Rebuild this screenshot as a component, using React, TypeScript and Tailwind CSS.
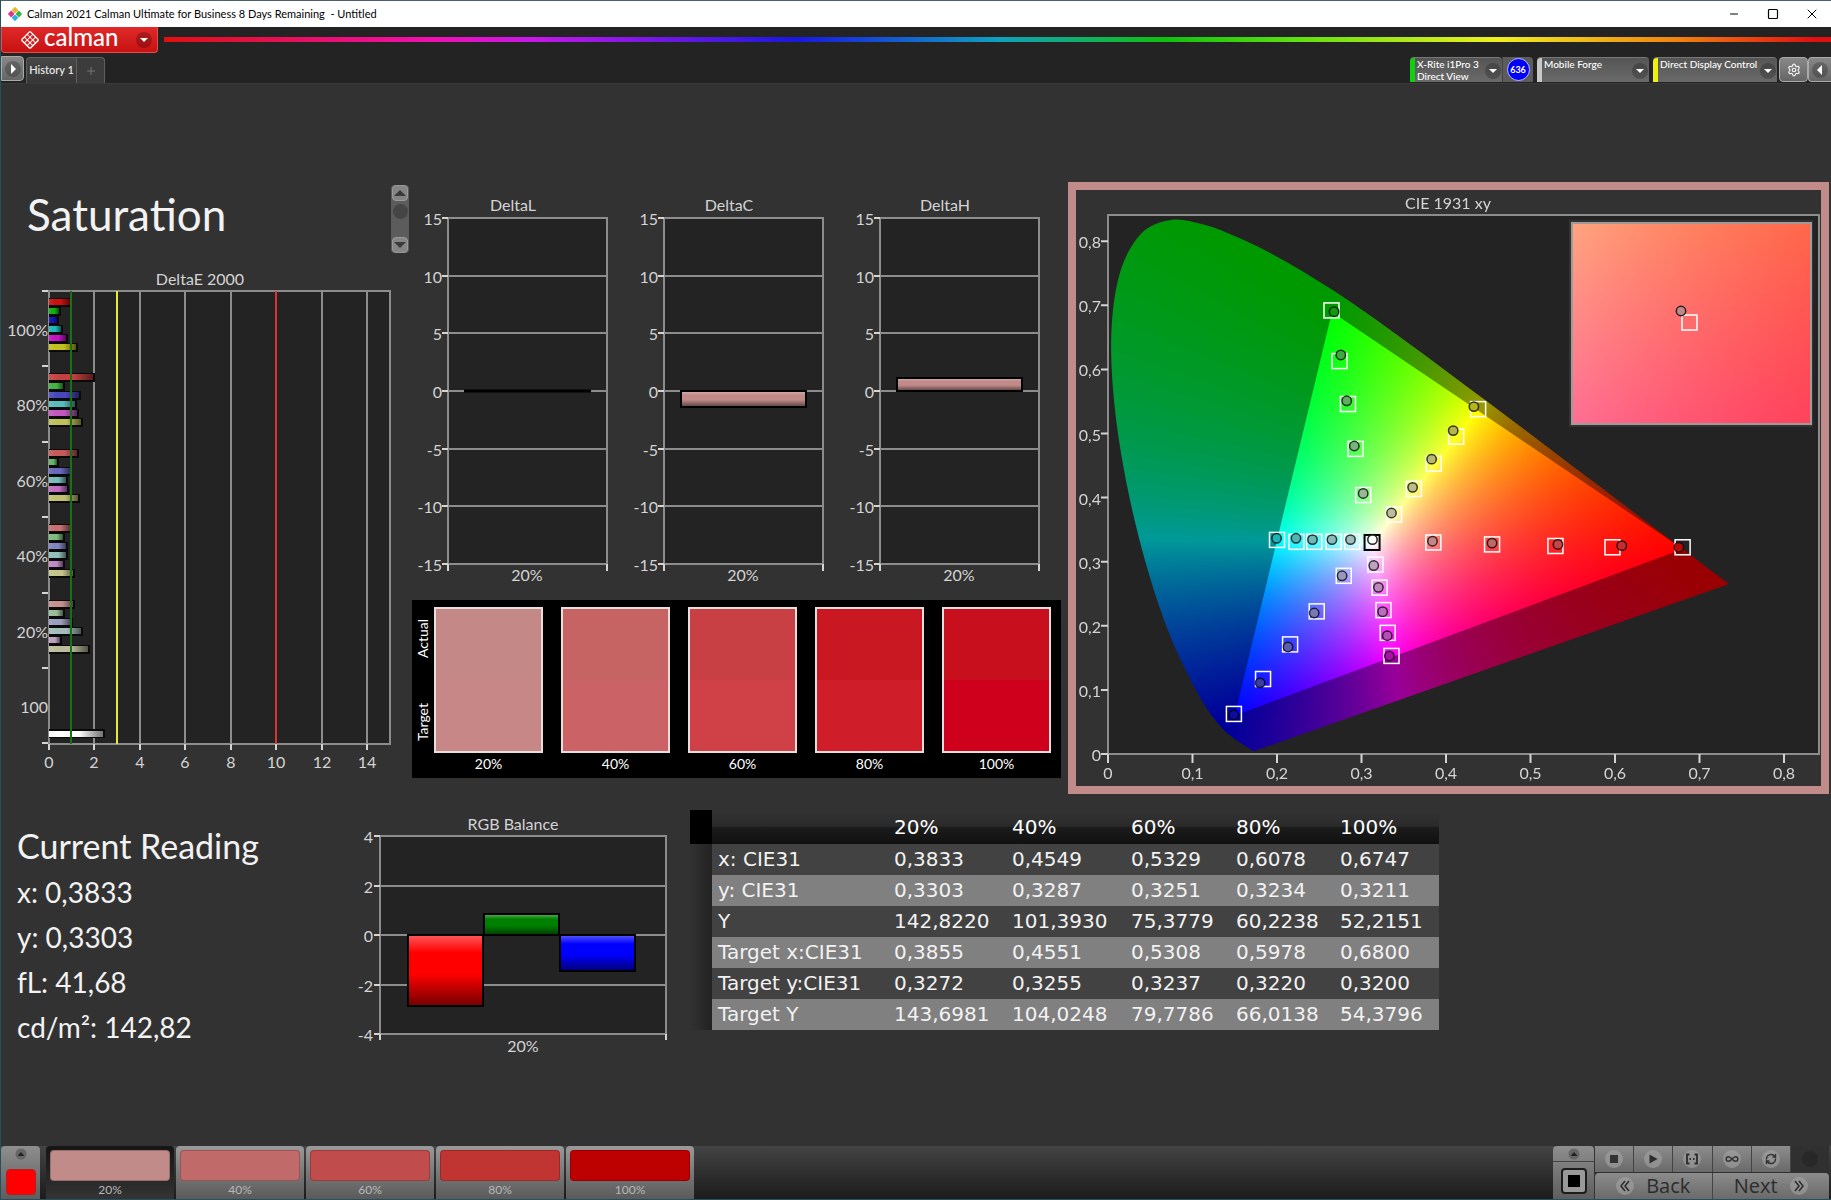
import { useEffect, useRef } from 'react';
import { clsx } from 'clsx';
import { Infinity as InfinityIcon, Minus, Plus, RefreshCw, Settings, Square, X } from 'lucide-react';

type Point = [number, number];

const SPECTRAL_LOCUS: Point[] = [
  [0.1741, 0.005], [0.1733, 0.0048], [0.1714, 0.0051], [0.1689, 0.0069], [0.1644, 0.0109],
  [0.1566, 0.0177], [0.151, 0.0227], [0.144, 0.0297], [0.1355, 0.0399], [0.1241, 0.0578],
  [0.1096, 0.0868], [0.0913, 0.1327], [0.0687, 0.2007], [0.0454, 0.295], [0.0235, 0.4127],
  [0.0082, 0.5384], [0.0039, 0.6548], [0.0139, 0.7502], [0.0389, 0.812], [0.0743, 0.8338],
  [0.1142, 0.8262], [0.1547, 0.8059], [0.1929, 0.7816], [0.2296, 0.7543], [0.2658, 0.7243],
  [0.3016, 0.6923], [0.3373, 0.6589], [0.3731, 0.6245], [0.4087, 0.5896], [0.4441, 0.5547],
  [0.4788, 0.5202], [0.5125, 0.4866], [0.5448, 0.4544], [0.5752, 0.4242], [0.6029, 0.3965],
  [0.627, 0.3725], [0.6658, 0.334], [0.6915, 0.3083], [0.719, 0.2809], [0.7347, 0.2653],
];

// DCI-P3 primaries
const GAMUT: Point[] = [[0.68, 0.32], [0.265, 0.69], [0.15, 0.06]];

interface Sample {
  target: Point;
  actual: Point;
  fill: string;
}

const samples: Sample[] = [
  { target: [0.2645, 0.692], actual: [0.2675, 0.69], fill: '#109a10' },
  { target: [0.274, 0.613], actual: [0.2755, 0.6225], fill: '#3fa83f' },
  { target: [0.284, 0.546], actual: [0.2825, 0.551], fill: '#5fae5f' },
  { target: [0.293, 0.476], actual: [0.2915, 0.4805], fill: '#7ab47a' },
  { target: [0.302, 0.404], actual: [0.302, 0.4065], fill: '#98b898' },
  { target: [0.438, 0.538], actual: [0.433, 0.542], fill: '#b4b41c' },
  { target: [0.412, 0.495], actual: [0.4085, 0.5045], fill: '#b4b450' },
  { target: [0.3855, 0.453], actual: [0.383, 0.46], fill: '#b8b870' },
  { target: [0.362, 0.4135], actual: [0.3605, 0.416], fill: '#bcbc88' },
  { target: [0.3385, 0.3735], actual: [0.3355, 0.376], fill: '#bcbca0' },
  { target: [0.2, 0.334], actual: [0.1995, 0.3365], fill: '#1cb4b4' },
  { target: [0.223, 0.331], actual: [0.2225, 0.3365], fill: '#50b4b4' },
  { target: [0.244, 0.331], actual: [0.242, 0.3345], fill: '#70b8b8' },
  { target: [0.267, 0.331], actual: [0.265, 0.3345], fill: '#88bcbc' },
  { target: [0.289, 0.331], actual: [0.287, 0.3345], fill: '#a0bcbc' },
  { target: [0.385, 0.33], actual: [0.384, 0.332], fill: '#c08888' },
  { target: [0.4545, 0.327], actual: [0.4545, 0.329], fill: '#c06868' },
  { target: [0.5295, 0.3245], actual: [0.5325, 0.327], fill: '#c04848' },
  { target: [0.597, 0.3225], actual: [0.608, 0.325], fill: '#c03030' },
  { target: [0.68, 0.3225], actual: [0.6755, 0.3225], fill: '#b80808' },
  { target: [0.3165, 0.2955], actual: [0.3145, 0.294], fill: '#bca4bc' },
  { target: [0.3215, 0.2595], actual: [0.32, 0.26], fill: '#bc88bc' },
  { target: [0.326, 0.2245], actual: [0.325, 0.222], fill: '#bc6cbc' },
  { target: [0.331, 0.189], actual: [0.3305, 0.1845], fill: '#b84cb8' },
  { target: [0.3355, 0.153], actual: [0.333, 0.153], fill: '#a810a8' },
  { target: [0.279, 0.278], actual: [0.277, 0.278], fill: '#9898bc' },
  { target: [0.247, 0.2225], actual: [0.244, 0.22], fill: '#7878b4' },
  { target: [0.2155, 0.171], actual: [0.213, 0.167], fill: '#5c5cb0' },
  { target: [0.1835, 0.117], actual: [0.18, 0.111], fill: '#3c3ca8' },
  { target: [0.149, 0.0625], actual: [0.149, 0.061], fill: '#0c0ca0' },
];

const swatches = [
  { label: '20%', actual: '#c48886', target: '#c88787', button: '#c08b88' },
  { label: '40%', actual: '#c66464', target: '#cb6366', button: '#c06a69' },
  { label: '60%', actual: '#c84043', target: '#cf4047', button: '#c04c4b' },
  { label: '80%', actual: '#c91822', target: '#cf1e29', button: '#c03432' },
  { label: '100%', actual: '#c80f1e', target: '#cf001b', button: '#bd0000' },
];

const deltaE = [
  { label: '100%', values: [0.95, 0.46, 0.36, 0.56, 0.76, 1.2], colors: ['#cc1111', '#12b012', '#1616b8', '#22b8b8', '#c413c4', '#c0c01c'] },
  { label: '80%', values: [1.97, 0.65, 1.35, 1.15, 1.24, 1.42], colors: ['#c44040', '#44b444', '#4848bc', '#58bcbc', '#c058c0', '#c0c058'] },
  { label: '60%', values: [1.24, 0.36, 0.95, 0.76, 0.83, 1.28], colors: ['#c45a5a', '#64b864', '#6868bc', '#78bcbc', '#c070c0', '#c0c070'] },
  { label: '40%', values: [0.95, 0.62, 0.76, 0.76, 0.64, 1.07], colors: ['#c87070', '#7cbc7c', '#8484c0', '#90c0bc', '#c088c4', '#c4c48a'] },
  { label: '20%', values: [1.07, 0.62, 0.97, 1.45, 0.5, 1.73], colors: ['#c49090', '#98bc98', '#9c9cc0', '#a4bcbc', '#bca0c0', '#bcbc9c'] },
];

const measurements: [string, string[]][] = [
  ['x: CIE31', ['0,3833', '0,4549', '0,5329', '0,6078', '0,6747']],
  ['y: CIE31', ['0,3303', '0,3287', '0,3251', '0,3234', '0,3211']],
  ['Y', ['142,8220', '101,3930', '75,3779', '60,2238', '52,2151']],
  ['Target x:CIE31', ['0,3855', '0,4551', '0,5308', '0,5978', '0,6800']],
  ['Target y:CIE31', ['0,3272', '0,3255', '0,3237', '0,3220', '0,3200']],
  ['Target Y', ['143,6981', '104,0248', '79,7786', '66,0138', '54,3796']],
];

const readings = ['x: 0,3833', 'y: 0,3303', 'fL: 41,68', 'cd/m²: 142,82'];

// xy -> P3 RGB, out of range channels clipped and the brightest scaled to full
function xyToRgb(x: number, y: number) {
  const yy = Math.max(y, 0.0001);
  const X = x / yy;
  const Z = (1 - x - yy) / yy;
  const r = Math.max(0, 2.4935 * X - 0.9314 - 0.4027 * Z);
  const g = Math.max(0, -0.8295 * X + 1.7627 + 0.0236 * Z);
  const b = Math.max(0, 0.0358 * X - 0.0762 + 0.9569 * Z);
  const max = Math.max(r, g, b);
  return [(r / max) * 255, (g / max) * 255, (b / max) * 255];
}

interface GamutFieldProps {
  left: number;
  top: number;
  width: number;
  height: number;
  xRange: Point;
  yRange: Point;
  locus?: boolean;
}

function GamutField({ left, top, width, height, xRange, yRange, locus }: GamutFieldProps) {
  const ref = useRef<HTMLCanvasElement>(null);

  useEffect(() => {
    const ctx = ref.current?.getContext('2d');
    if (!ctx) return;

    const image = ctx.createImageData(width, height);
    for (let j = 0; j < height; j++) {
      const y = yRange[1] - ((j + 0.5) / height) * (yRange[1] - yRange[0]);
      for (let i = 0; i < width; i++) {
        const x = xRange[0] + ((i + 0.5) / width) * (xRange[1] - xRange[0]);
        const [r, g, b] = xyToRgb(x, y);
        image.data.set([r, g, b, 255], (j * width + i) * 4);
      }
    }
    ctx.putImageData(image, 0, 0);
    if (!locus) return;

    const px = ([x, y]: Point): Point => [
      ((x - xRange[0]) / (xRange[1] - xRange[0])) * width,
      ((yRange[1] - y) / (yRange[1] - yRange[0])) * height,
    ];

    // Cut the field to the horseshoe
    const pts = SPECTRAL_LOCUS.map(px);
    ctx.globalCompositeOperation = 'destination-in';
    ctx.beginPath();
    ctx.moveTo(...pts[0]);
    for (let i = 0; i < pts.length - 1; i++) {
      const p0 = pts[Math.max(i - 1, 0)];
      const p1 = pts[i];
      const p2 = pts[i + 1];
      const p3 = pts[Math.min(i + 2, pts.length - 1)];
      ctx.bezierCurveTo(
        p1[0] + (p2[0] - p0[0]) / 6,
        p1[1] + (p2[1] - p0[1]) / 6,
        p2[0] - (p3[0] - p1[0]) / 6,
        p2[1] - (p3[1] - p1[1]) / 6,
        p2[0],
        p2[1]
      );
    }
    ctx.closePath();
    ctx.fill();

    // Dim everything outside the target gamut
    ctx.globalCompositeOperation = 'source-atop';
    ctx.fillStyle = 'rgba(0, 0, 0, 0.4)';
    ctx.beginPath();
    ctx.rect(0, 0, width, height);
    GAMUT.map(px).forEach((p, i) => (i ? ctx.lineTo(...p) : ctx.moveTo(...p)));
    ctx.closePath();
    ctx.fill('evenodd');
    ctx.globalCompositeOperation = 'source-over';
  }, [width, height, xRange, yRange, locus]);

  return (
    <foreignObject x={left} y={top} width={width} height={height}>
      <canvas ref={ref} width={width} height={height} className="block" />
    </foreignObject>
  );
}

const X_RANGE: Point = [0, 0.84];
const Y_RANGE: Point = [0, 0.84];
const ZOOM_X: Point = [0.374, 0.433];
const ZOOM_Y: Point = [0.3003, 0.3537];

function CieChart() {
  const cx = (x: number) => 32 + x * 845;
  const cy = (y: number) => 564 - y * 641;

  return (
    <svg viewBox="0 0 745 596" className="block w-full" role="img" aria-label="CIE 1931 xy">
      <rect x="32" y="25" width="711" height="539" fill="#232323" stroke="#8c8c8c" strokeWidth="2" />
      <GamutField left={32} top={26} width={710} height={538} xRange={X_RANGE} yRange={Y_RANGE} locus />
      <text x="372" y="19" textAnchor="middle" className="fill-[#d4d4d4] text-[16px]">CIE 1931 xy</text>
      {[0, 1, 2, 3, 4, 5, 6, 7, 8].map((n) => (
        <g key={n} className="fill-[#d4d4d4] text-[16px]">
          <path d={`M${cx(n / 10)} 564v9M32 ${cy(n / 10)}h-7`} stroke="#d4d4d4" strokeWidth="2" />
          <text x={cx(n / 10)} y="589" textAnchor="middle">{n ? `0,${n}` : '0'}</text>
          <text x="25" y={cy(n / 10) + 7} textAnchor="end">{n ? `0,${n}` : '0'}</text>
        </g>
      ))}
      {samples.map(({ target, actual, fill }) => (
        <g key={fill + target[0]}>
          <rect x={cx(target[0]) - 7.5} y={cy(target[1]) - 7.5} width="15" height="15" fill="none" stroke="#fff" strokeWidth="1.5" />
          <circle cx={cx(actual[0])} cy={cy(actual[1])} r="4.7" fill={fill} stroke="#000" strokeOpacity="0.75" strokeWidth="1.5" />
        </g>
      ))}
      <rect x={cx(0.3125) - 7.5} y={cy(0.33) - 7.5} width="15" height="15" fill="none" stroke="#000" strokeWidth="2" />
      <circle cx={cx(0.313)} cy={cy(0.3345)} r="4.7" fill="#fff" stroke="#222" strokeWidth="1.5" />

      <rect x="493" y="30" width="244" height="207" fill="#333" />
      <GamutField left={496} top={33} width={239} height={201} xRange={ZOOM_X} yRange={ZOOM_Y} />
      <rect x="496" y="33" width="239" height="201" fill="none" stroke="#a09a98" strokeWidth="2" />
      <rect x="606" y="125" width="15" height="15" fill="none" stroke="#fff" strokeWidth="1.5" />
      <circle cx="605" cy="121" r="4.7" fill="#c08888" stroke="#222" strokeWidth="1.5" />
    </svg>
  );
}

function GlossDefs({ id, horizontal }: { id: string; horizontal?: boolean }) {
  return (
    <defs>
      <linearGradient id={id} x2={horizontal ? 1 : 0} y2={horizontal ? 0 : 1}>
        <stop offset="0" stopColor="#fff" stopOpacity={horizontal ? 0.1 : 0.35} />
        <stop offset="0.25" stopColor="#fff" stopOpacity="0" />
        <stop offset="0.55" stopColor="#000" stopOpacity="0" />
        <stop offset="1" stopColor="#000" stopOpacity="0.55" />
      </linearGradient>
    </defs>
  );
}

function DeltaEChart() {
  const cx = (v: number) => Math.round(48.5 + v * 22.75);
  const pitch = 75.4;

  return (
    <svg viewBox="1 -6 404 513" className="block w-full" role="img" aria-label="DeltaE 2000">
      <GlossDefs id="gloss-e" horizontal />
      <text x="200" y="13" textAnchor="middle" className="fill-[#d4d4d4] text-[16px]">DeltaE 2000</text>
      <rect x="49" y="19" width="341" height="453" fill="#232323" stroke="#8c8c8c" strokeWidth="2" />
      {[0, 2, 4, 6, 8, 10, 12, 14].map((v) => (
        <g key={v}>
          {v > 0 && <path d={`M${cx(v)} 19v453`} stroke="#8c8c8c" strokeWidth="2" />}
          <path d={`M${cx(v)} 472v6`} stroke="#d4d4d4" strokeWidth="2" />
          <text x={cx(v)} y="496" textAnchor="middle" className="fill-[#d4d4d4] text-[16px]">{v}</text>
        </g>
      ))}
      {[0, 1, 2, 3, 4, 5, 6].map((n) => (
        <path key={n} d={`M42 ${Math.round(19 + n * pitch)}h6`} stroke="#d4d4d4" strokeWidth="2" />
      ))}
      {deltaE.map((group, n) => (
        <g key={group.label}>
          <text x="48" y={Math.round(64 + n * pitch)} textAnchor="end" className="fill-[#d4d4d4] text-[16px]">{group.label}</text>
          {group.values.map((v, i) => {
            const y = Math.round(26 + n * pitch + i * 9);
            return (
              <g key={i}>
                <rect x="49" y={y} width={cx(v) - 47} height="9" fill="#0a0a0a" />
                <rect x="49" y={y + 1} width={cx(v) - 49} height="6" fill={group.colors[i]} />
                <rect x="49" y={y + 1} width={cx(v) - 49} height="6" fill="url(#gloss-e)" />
              </g>
            );
          })}
        </g>
      ))}
      <text x="48" y="441" textAnchor="end" className="fill-[#d4d4d4] text-[16px]">100</text>
      <rect x="49" y="457" width="56" height="9" fill="#0a0a0a" />
      <rect x="49" y="459" width="54" height="6" fill="#fff" />
      <rect x="49" y="459" width="54" height="6" fill="url(#gloss-e)" />
      <path d={`M${cx(1)} 19v453`} stroke="#187018" strokeWidth="2" />
      <path d={`M${cx(3)} 19v453`} stroke="#e8e838" strokeWidth="2" />
      <path d={`M${cx(10)} 19v453`} stroke="#d83434" strokeWidth="2" />
    </svg>
  );
}

function DeltaChart({ title, value }: { title: string; value: number }) {
  const cy = (v: number) => Math.round(209 - v * 11.53);
  const top = Math.min(cy(0), cy(value));
  const height = Math.abs(cy(value) - cy(0));
  const id = `gloss-${title}`;

  return (
    <svg viewBox="0 0 216 410" className="block w-full min-w-0 flex-1" role="img" aria-label={title}>
      <GlossDefs id={id} />
      <text x="108" y="29" textAnchor="middle" className="fill-[#d4d4d4] text-[16px]">{title}</text>
      <rect x="43" y={cy(15)} width="159" height={cy(-15) - cy(15)} fill="#232323" stroke="#8c8c8c" strokeWidth="2" />
      {[15, 10, 5, 0, -5, -10, -15].map((v) => (
        <g key={v}>
          <path d={`M43 ${cy(v)}h159`} stroke="#8c8c8c" strokeWidth="2" />
          <path d={`M37 ${cy(v)}h6`} stroke="#d4d4d4" strokeWidth="2" />
          <text x="37" y={cy(v) + 7} textAnchor="end" className="fill-[#d4d4d4] text-[16px]">{v}</text>
        </g>
      ))}
      <path d={`M43 ${cy(-15)}v7M202 ${cy(-15)}v7`} stroke="#d4d4d4" strokeWidth="2" />
      <text x="122" y="399" textAnchor="middle" className="fill-[#d4d4d4] text-[16px]">20%</text>
      {height === 0 ? (
        <path d={`M59 ${cy(0)}h127`} stroke="#000" strokeWidth="3" />
      ) : (
        <>
          <rect x="60" y={top} width="125" height={height} fill="#c08b88" />
          <rect x="60" y={top} width="125" height={height} fill={`url(#${id})`} stroke="#000" strokeWidth="2" />
        </>
      )}
    </svg>
  );
}

function RgbBalance() {
  const cy = (v: number) => Math.round(125 - v * 24.75);
  const bars = [
    { x: 63, value: -2.85, fill: '#ff0000' },
    { x: 139, value: 0.84, fill: '#008000' },
    { x: 215, value: -1.45, fill: '#0000ff' },
  ];

  return (
    <svg viewBox="0 0 345 250" className="block w-full" role="img" aria-label="RGB Balance">
      <GlossDefs id="gloss-rgb" />
      <text x="168" y="20" textAnchor="middle" className="fill-[#d4d4d4] text-[16px]">RGB Balance</text>
      <rect x="35" y={cy(4)} width="286" height={cy(-4) - cy(4)} fill="#232323" stroke="#8c8c8c" strokeWidth="2" />
      {[4, 2, 0, -2, -4].map((v) => (
        <g key={v}>
          <path d={`M35 ${cy(v)}h286`} stroke="#8c8c8c" strokeWidth="2" />
          <path d={`M29 ${cy(v)}h6`} stroke="#d4d4d4" strokeWidth="2" />
          <text x="28" y={cy(v) + 7} textAnchor="end" className="fill-[#d4d4d4] text-[16px]">{v}</text>
        </g>
      ))}
      <path d={`M35 ${cy(-4)}v6M321 ${cy(-4)}v6`} stroke="#d4d4d4" strokeWidth="2" />
      {bars.map(({ x, value, fill }) => {
        const top = Math.min(cy(0), cy(value));
        const height = Math.abs(cy(value) - cy(0));
        return (
          <g key={fill}>
            <rect x={x} y={top} width="75" height={height} fill={fill} />
            <rect x={x} y={top} width="75" height={height} fill="url(#gloss-rgb)" stroke="#000" strokeWidth="2" />
          </g>
        );
      })}
      <text x="178" y="242" textAnchor="middle" className="fill-[#d4d4d4] text-[16px]">20%</text>
    </svg>
  );
}

function LogoMark({ className, colors }: { className: string; colors: string[] }) {
  return (
    <svg viewBox="0 0 22 22" className={className} aria-hidden="true">
      <g transform="rotate(45 11 11)">
        {colors.map((c, i) => (
          <rect key={i} x={4 + (i % 2) * 7.4} y={4 + Math.floor(i / 2) * 7.4} width="6.6" height="6.6" rx="1" fill={c} />
        ))}
      </g>
    </svg>
  );
}

function CalmanMark() {
  return (
    <svg viewBox="0 0 22 22" className="size-5" aria-hidden="true">
      <g transform="rotate(45 11 11)">
        <rect x="3.5" y="3.5" width="15" height="15" rx="2" fill="#fff" />
        {[0, 1, 2].map((r) =>
          [0, 1, 2].map((c) => (
            <rect key={`${r}${c}`} x={5 + c * 4.3} y={5 + r * 4.3} width="3.3" height="3.3" rx="0.5" fill="#d81c1c" />
          ))
        )}
      </g>
    </svg>
  );
}

function Arrow({ direction }: { direction: 'down' | 'up' | 'left' | 'right' }) {
  const paths = {
    down: 'M5 7h8l-4 4z',
    up: 'M5 11h8l-4-4z',
    left: 'M11 4v10l-5-5z',
    right: 'M7 4v10l5-5z',
  };
  return (
    <svg viewBox="0 0 18 18" className="size-[18px] shrink-0" aria-hidden="true">
      <circle cx="9" cy="9" r="8" fill="#000" fillOpacity="0.22" />
      <path d={paths[direction]} fill="#fff" />
    </svg>
  );
}

interface DeviceProps {
  lines: string[];
  accent: string;
  className: string;
}

function Device({ lines, accent, className }: DeviceProps) {
  return (
    <button className={clsx('flex h-[25px] items-start rounded-t border-t border-[#777] bg-linear-to-b from-[#555] to-[#6a6a6a] text-left', className)}>
      <span className={clsx('h-full w-[5px] shrink-0 rounded-tl', accent)} />
      <span className="flex-1 pl-0.5 text-[10px] leading-3 font-medium whitespace-nowrap text-white">
        {lines.map((line) => (
          <span key={line} className="block">{line}</span>
        ))}
      </span>
      <span className="mt-1">
        <Arrow direction="down" />
      </span>
    </button>
  );
}

function Transport() {
  const round = 'flex size-[18px] items-center justify-center rounded-full bg-[#a4a4a4]/60 text-[#333]';
  const cell = 'flex h-[26px] flex-1 items-center justify-center border-r border-[#444] bg-linear-to-b from-[#8c8c8c] to-[#6a6a6a]';

  return (
    <div className="flex w-[276px] shrink-0">
      <div className="flex w-[42px] flex-col rounded-t border-r border-[#333] bg-linear-to-b from-[#8e8e8e] to-[#5e5e5e]">
        <button className="flex h-4 items-center justify-center border-b border-[#444]" aria-label="Expand">
          <svg viewBox="0 0 12 12" className="size-3"><circle cx="6" cy="6" r="5.5" fill="#666" /><path d="M2.500 8h7L6 4z" fill="#222" /></svg>
        </button>
        <button className="mx-auto mt-1.5 flex size-[26px] items-center justify-center rounded border-2 border-[#1c1c1c] bg-[#999]" aria-label="Stop pattern">
          <span className="size-3 bg-black" />
        </button>
      </div>
      <div className="flex flex-1 flex-col">
        <div className="flex">
          <button className={cell} aria-label="Stop">
            <span className={round}><span className="size-2 bg-[#333]" /></span>
          </button>
          <button className={cell} aria-label="Play">
            <span className={round}>
              <svg viewBox="0 0 10 10" className="size-2.5"><path d="M1.500 0.500v9l8-4.500z" fill="#2c2c2c" /></svg>
            </span>
          </button>
          <button className={cell} aria-label="Read range">
            <span className={round}>
              <svg viewBox="0 0 14 12" className="h-3 w-3.5" fill="none" stroke="#2c2c2c" strokeWidth="1.800">
                <path d="M4.500 1.500H2v9h2.500M9.500 1.500H12v9H9.500M4.500 6h1.500M8 6h1.500" />
              </svg>
            </span>
          </button>
          <button className={cell} aria-label="Continuous">
            <span className={round}><InfinityIcon className="size-3.5" strokeWidth={2.5} /></span>
          </button>
          <button className={cell} aria-label="Repeat">
            <span className={round}><RefreshCw className="size-3" strokeWidth={3} /></span>
          </button>
          <div className="flex h-[26px] flex-1 items-center justify-center bg-[#303030]">
            <span className="size-4 rounded-full bg-[#282828]" />
          </div>
        </div>
        <div className="flex h-[27px] pt-px text-[20px] text-[#2c2c2c]">
          <button className="flex flex-1 items-center justify-center gap-3 rounded-tl border-r border-[#444] bg-linear-to-b from-[#8c8c8c] to-[#6a6a6a] font-[Open_Sans,sans-serif] font-medium">
            <span className={round}><Chevrons /></span>
            Back
          </button>
          <button className="flex flex-1 items-center justify-center gap-3 rounded-tr bg-linear-to-b from-[#8c8c8c] to-[#6a6a6a] font-[Open_Sans,sans-serif] font-medium">
            Next
            <span className={round}><Chevrons right /></span>
          </button>
        </div>
      </div>
    </div>
  );
}

function Chevrons({ right }: { right?: boolean }) {
  return (
    <svg viewBox="0 0 12 12" className="size-3" fill="none" stroke="#2c2c2c" strokeWidth="1.500">
      <path d={right ? 'M2 1l4 5-4 5M6 1l4 5-4 5' : 'M6 1L2 6l4 5M10 1L6 6l4 5'} />
    </svg>
  );
}

export default function App() {
  return (
    <div className="flex min-h-screen flex-col border-l border-[#24505f] bg-[#323232] font-[Lato,sans-serif] text-[#f2f2f2]">
      {/* Title bar */}
      <header className="flex h-[27px] items-center border-t border-[#4a6070] bg-white pl-1.5 text-black">
        <LogoMark className="size-4" colors={['#f0b428', '#35b84a', '#e8308c', '#28b4e0']} />
        <h1 className="ml-1 flex-1 text-[11px] whitespace-pre">
          Calman 2021 Calman Ultimate for Business 8 Days Remaining  - Untitled
        </h1>
        <button className="flex w-[39px] justify-center" aria-label="Minimize"><Minus className="size-3" strokeWidth={2} /></button>
        <button className="flex w-[39px] justify-center" aria-label="Maximize"><Square className="size-3" strokeWidth={2.4} /></button>
        <button className="flex w-[39px] justify-center" aria-label="Close"><X className="size-4" strokeWidth={1.5} /></button>
      </header>

      {/* Brand strip and tabs */}
      <div className="bg-[#232323]">
        <div className="flex h-[29px] items-start">
          <button className="flex h-[26px] w-[157px] items-center rounded-b border border-t-0 border-[#e05050] bg-linear-to-b from-[#e02828] to-[#c81010] pl-[18px] text-white">
            <CalmanMark />
            <span className="ml-1 flex-1 pb-1.5 text-left text-[24px] leading-5 font-medium">calman</span>
            <span className="mr-1"><Arrow direction="down" /></span>
          </button>
          <div className="mt-2.5 ml-1.5 h-[5px] flex-1 bg-[linear-gradient(90deg,#e01010_0%,#f010b0_16%,#c818e8_22%,#1818e0_38%,#10a0c0_50%,#10c010_60%,#60e010_68%,#f0f020_80%,#f08010_91%,#e01010_99%)]" />
        </div>
        <nav className="flex h-[27px] items-start">
          <button className="flex h-[25px] w-[23px] items-center justify-center rounded-r border border-[#aaa] bg-linear-to-b from-[#888] to-[#666]" aria-label="Show workflow">
            <Arrow direction="right" />
          </button>
          <button className="mt-px ml-0.5 h-[26px] w-[51px] rounded-tl border border-b-0 border-[#606060] bg-linear-to-b from-[#484848] to-[#363636] text-[11px] font-medium whitespace-nowrap text-[#eee]">
            History 1
          </button>
          <button className="mt-px flex h-[26px] w-7 items-center justify-center rounded-tr border border-b-0 border-l-0 border-[#606060] bg-[#3c3c3c] text-[#777]" aria-label="Add tab">
            <Plus className="size-3" />
          </button>
          <div className="flex-1" />
          <div className="mt-px flex items-start">
            <Device lines={['X-Rite i1Pro 3', 'Direct View']} accent="bg-[#10d010]" className="w-[92px]" />
            <div className="flex h-[25px] w-[31px] items-center justify-center rounded-tr border-l border-[#444] bg-[#5c5c5c]">
              <span className="flex size-[23px] items-center justify-center rounded-full border border-[#b8b8ff] bg-[#0000f8] text-[9px] font-bold text-white">636</span>
            </div>
            <Device lines={['Mobile Forge']} accent="bg-[#c8c8c8]" className="ml-1 w-[112px]" />
            <Device lines={['Direct Display Control']} accent="bg-[#f0f010]" className="ml-1 w-[124px]" />
            <button className="ml-0.5 flex h-[25px] w-[29px] items-center justify-center rounded border border-[#aaa] bg-linear-to-b from-[#888] to-[#666]" aria-label="Settings">
              <Settings className="size-3.5" strokeWidth={2} />
            </button>
            <button className="flex h-[25px] w-[23px] items-center justify-center rounded-l border border-r-0 border-[#aaa] bg-linear-to-b from-[#888] to-[#666]" aria-label="Show panel">
              <Arrow direction="left" />
            </button>
          </div>
        </nav>
      </div>

      <main className="flex-1 border-t border-[#3a3a3a] pt-[98px]">
        <div className="grid grid-cols-[minmax(0,404fr)_minmax(0,663fr)_minmax(0,763fr)] items-start">
          {/* DeltaE */}
          <section>
            <div className="flex h-[84px] items-start justify-between">
              <h2 className="pt-1 pl-[26px] text-[44px] leading-[56px]">Saturation</h2>
              <div className="-mr-1 mt-[3px] flex h-[68px] w-[18px] flex-col items-center justify-between rounded-sm bg-[#5c5c5c]">
                <button className="flex size-4 items-center justify-center rounded-sm border border-[#999] bg-[#858585]" aria-label="Scroll up">
                  <svg viewBox="0 0 12 6" className="h-1.5 w-3"><path d="M0 6h12L6 0z" fill="#3a3a3a" /></svg>
                </button>
                <span className="mb-4 size-[15px] rounded-full bg-[#454545]" />
                <button className="flex size-4 items-center justify-center rounded-sm border border-[#999] bg-[#858585]" aria-label="Scroll down">
                  <svg viewBox="0 0 12 6" className="h-1.5 w-3"><path d="M0 0h12L6 6z" fill="#3a3a3a" /></svg>
                </button>
              </div>
            </div>
            <DeltaEChart />
          </section>

          {/* Delta L/C/H and swatches */}
          <section className="pr-[7px]">
            <div className="flex pr-2">
              <DeltaChart title="DeltaL" value={0} />
              <DeltaChart title="DeltaC" value={-1.4} />
              <DeltaChart title="DeltaH" value={1.17} />
            </div>
            <div className="mt-2 ml-[7px] flex items-start bg-black pt-[7px] pr-2.5 pb-1">
              <div className="flex h-[146px] w-[22px] shrink-0 flex-col items-center justify-between py-3 text-[14px] leading-[22px] text-white">
                <span className="rotate-180 [writing-mode:vertical-rl]">Actual</span>
                <span className="rotate-180 [writing-mode:vertical-rl]">Target</span>
              </div>
              <div className="flex flex-1 gap-[18px]">
                {swatches.map((s) => (
                  <div key={s.label} className="flex-1 text-center text-[14px] leading-[21px] text-white">
                    <div className="h-[146px] border-2 border-[#e8dede]">
                      <div className="h-1/2" style={{ backgroundColor: s.actual }} />
                      <div className="h-1/2" style={{ backgroundColor: s.target }} />
                    </div>
                    {s.label}
                  </div>
                ))}
              </div>
            </div>
          </section>

          {/* Chromaticity */}
          <section className="mr-0.5 border-8 border-[#c08b88]">
            <CieChart />
          </section>
        </div>

        <div className="mt-4 grid grid-cols-[minmax(0,344fr)_minmax(0,345fr)_minmax(0,749fr)_minmax(0,392fr)] items-start">
          <section className="pt-3 pl-4">
            <h2 className="text-[34px] leading-[48px]">Current Reading</h2>
            {readings.map((r) => (
              <p key={r} className="text-[28px] leading-[45px]">{r}</p>
            ))}
          </section>

          <RgbBalance />

          <table className="w-full table-fixed border-collapse text-left font-[DejaVu_Sans,sans-serif] text-[20px] leading-[31px]">
            <colgroup>
              <col className="w-[22px]" />
              <col className="w-[176px]" />
              <col className="w-[118px]" />
              <col className="w-[119px]" />
              <col className="w-[105px]" />
              <col className="w-[104px]" />
              <col className="w-[105px]" />
            </colgroup>
            <thead>
              <tr className="h-[34px] bg-[linear-gradient(#333_0%,#2a2a2a_48%,#1c1c1c_50%,#101010_100%)] text-white">
                <td className="bg-black" />
                <td />
                {swatches.map((s) => (
                  <th key={s.label} scope="col" className="p-0 pl-1.5 font-normal">{s.label}</th>
                ))}
              </tr>
            </thead>
            <tbody>
              {measurements.map(([label, values], i) => (
                <tr key={label} className={clsx('h-[31px]', i % 2 ? 'bg-[#808080]' : 'bg-[#424242]')}>
                  <td className="bg-linear-to-r from-[#323232] to-[#222]" />
                  <th scope="row" className="p-0 pl-1.5 font-normal whitespace-nowrap">{label}</th>
                  {values.map((v, n) => (
                    <td key={n} className="p-0 pl-1.5">{v}</td>
                  ))}
                </tr>
              ))}
            </tbody>
          </table>
        </div>
      </main>

      {/* Pattern bar */}
      <footer className="flex h-[54px] items-start border-b border-[#24505f] bg-linear-to-b from-[#444] to-[#1c1c1c] pr-0.5">
        <div className="flex h-[53px] w-[39px] shrink-0 flex-col items-center justify-between rounded-t bg-linear-to-b from-[#8e8e8e] to-[#5e5e5e] pt-0.5 pb-1">
          <button aria-label="Expand patterns">
            <svg viewBox="0 0 12 12" className="size-3"><circle cx="6" cy="6" r="5.5" fill="#666" /><path d="M2.500 8h7L6 4z" fill="#222" /></svg>
          </button>
          <span className="h-[26px] w-[30px] rounded-sm border border-[#b02020] bg-[#ff0000]" />
        </div>
        <div className="ml-1.5 flex flex-1 gap-0.5">
          {swatches.map((s, i) => (
            <button
              key={s.label}
              className={clsx(
                'flex h-[53px] w-32 flex-col items-center rounded-t px-1 pt-1 text-[12px] leading-[18px] text-[#b8b8b8]',
                i === 0 ? 'bg-linear-to-b from-[#151515] to-[#343434]' : 'bg-linear-to-b from-[#9a9a9a] to-[#5a5a5a]'
              )}
            >
              <span className="h-[31px] w-full rounded-sm border border-black/20" style={{ backgroundColor: s.button }} />
              {s.label}
            </button>
          ))}
        </div>
        <Transport />
      </footer>
    </div>
  );
}
